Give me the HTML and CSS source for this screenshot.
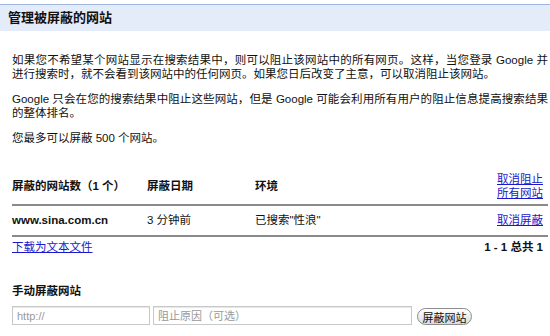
FILE: index.html
```html
<!DOCTYPE html>
<html>
<head>
<title>管理被屏蔽的网站</title>
<meta charset="utf-8">
<link rel="stylesheet" href="styles.css">
</head>
<body>

<h1 class="page-title">管理被屏蔽的网站</h1>

<div class="content">
  <p>如果您不希望某个网站显示在搜索结果中，则可以阻止该网站中的所有网页。这样，当您登录 Google 并进行搜索时，就不会看到该网站中的任何网页。如果您日后改变了主意，可以取消阻止该网站。</p>
  <p>Google 只会在您的搜索结果中阻止这些网站，但是 Google 可能会利用所有用户的阻止信息提高搜索结果的整体排名。</p>
  <p>您最多可以屏蔽 500 个网站。</p>

  <table class="blocked">
    <tr class="head">
      <th class="col-site">屏蔽的网站数（1 个）</th>
      <th class="col-date">屏蔽日期</th>
      <th class="col-env">环境</th>
      <th class="col-act"><a href="#">取消阻止<br>所有网站</a></th>
    </tr>
    <tr>
      <td class="site">www.sina.com.cn</td>
      <td>3 分钟前</td>
      <td>已搜索"性浪"</td>
      <td class="col-act"><a href="#">取消屏蔽</a></td>
    </tr>
  </table>

  <div class="table-foot">
    <a href="#">下载为文本文件</a>
    <span class="count">1 - 1 总共 1</span>
  </div>

  <h2 class="manual-title">手动屏蔽网站</h2>
  <div class="manual-form">
    <input class="url-input" type="text" placeholder="http://">
    <input class="reason-input" type="text" placeholder="阻止原因（可选）">
    <button class="block-btn">屏蔽网站</button>
  </div>
</div>

</body>
</html>
```

FILE: styles.css
```css
body {
  margin: 0;
  padding-top: 4px;
  font-family: "Liberation Sans", Arial, "Noto Sans CJK SC", sans-serif;
  font-size: 11.5px;
  color: #111;
  background: #fff;
}
a {
  color: #1a1acc;
}
.page-title {
  margin: 0;
  height: 26px;
  line-height: 26px;
  padding-left: 8px;
  background-color: #e5ecf9;
  border-top: 1px solid #9fb6df;
  font-size: 13px;
  font-weight: bold;
  color: #111;
}
.content {
  padding: 0 2px 0 12px;
}
p {
  margin: 11px 0;
  line-height: 14px;
  text-align: justify;
}
.content p:first-child {
  margin-top: 22px;
}
.blocked {
  width: 100%;
  margin-top: 24px;
  border-collapse: collapse;
}
.blocked th {
  text-align: left;
  font-weight: bold;
  padding: 3px 0 4px;
  line-height: 14px;
  vertical-align: middle;
  border-bottom: 2px solid #8a8a8a;
}
.blocked td {
  padding: 7px 0 8px;
  line-height: 14px;
  border-bottom: 2px solid #8a8a8a;
}
.col-site {
  width: 135px;
}
.col-date {
  width: 108px;
}
.blocked .col-act {
  text-align: right;
  padding-right: 5px;
  font-weight: normal;
  width: 70px;
}
.site {
  font-weight: bold;
}
.table-foot {
  display: flex;
  justify-content: space-between;
  margin-top: 3px;
  line-height: 14px;
  padding-right: 5px;
}
.count {
  font-weight: bold;
}
.manual-title {
  margin: 30px 0 8px;
  font-size: 11.5px;
  line-height: 14px;
  font-weight: bold;
}
.manual-form {
  display: flex;
  align-items: flex-end;
}
.manual-form input {
  box-sizing: border-box;
  height: 19px;
  margin: 0 3px 0 0;
  padding: 0 4px;
  border: 1px solid #c8c8c8;
  box-shadow: inset 0 1px 1px #e6e6e6;
  font-family: inherit;
  font-size: 11px;
}
.manual-form input::placeholder {
  color: #999;
}
.url-input {
  width: 138px;
}
.reason-input {
  width: 259px;
}
.block-btn {
  margin-left: 2px;
  width: 55px;
  height: 17px;
  padding: 0;
  border: 1px solid #8c8c8c;
  border-radius: 9px;
  background: linear-gradient(#ffffff, #dcdcdc);
  font-family: inherit;
  font-size: 11px;
  color: #111;
}
```
